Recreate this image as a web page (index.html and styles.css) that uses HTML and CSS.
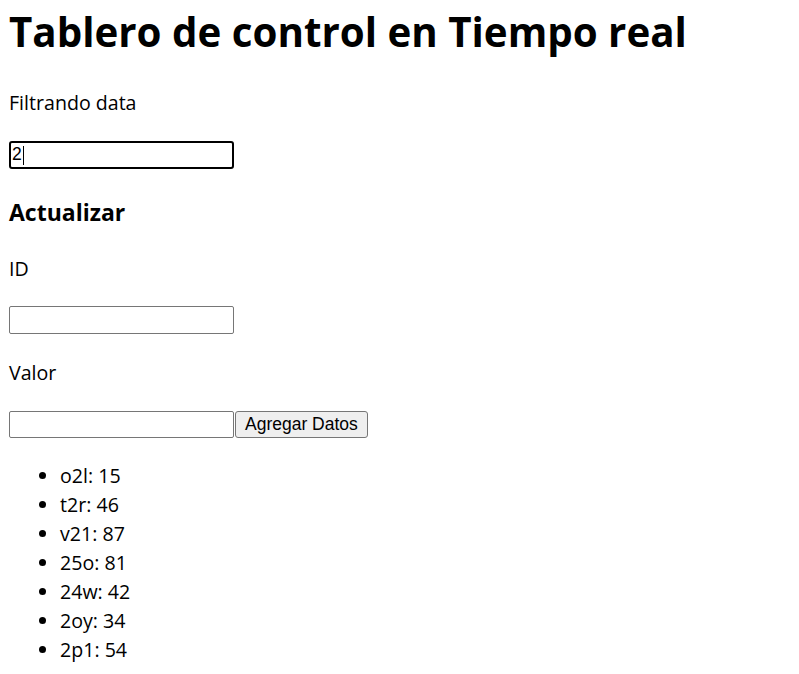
FILE: index.html
```html
<!DOCTYPE html>
<html lang="es">
<head>
<meta charset="utf-8">
<title>Tablero de control en Tiempo real</title>
<link rel="stylesheet" href="styles.css">
</head>
<body>
<h1 class="title">Tablero de control en Tiempo real</h1>
<p class="label">Filtrando data</p>
<p class="field"><input class="text-input focused" type="text" value="2"><span class="caret"></span></p>
<h3 class="subtitle">Actualizar</h3>
<p class="label">ID</p>
<p class="field"><input class="text-input" type="text"></p>
<p class="label">Valor</p>
<p class="field field-action"><input class="text-input short" type="text"><button class="btn" type="button">Agregar Datos</button></p>
<ul class="data-list">
<li>o2l: 15</li>
<li>t2r: 46</li>
<li>v21: 87</li>
<li>25o: 81</li>
<li>24w: 42</li>
<li>2oy: 34</li>
<li>2p1: 54</li>
</ul>
</body>
</html>
```
FILE: styles.css
```css
html, body {
  background: #ffffff;
}
body {
  margin: 0;
  padding: 0 9px;
  font-family: "Open Sans", "Noto Sans", sans-serif;
  font-size: 19.6px;
  line-height: 27px;
  color: #000;
}
.title {
  margin: 0 0 25px;
  font-size: 40.3px;
  line-height: 64px;
  font-weight: 700;
}
.label {
  margin: 0 0 24.5px;
}
.field {
  margin: 0 0 25px;
  display: flex;
  align-items: center;
  position: relative;
}
.field-action {
  margin-bottom: 23px;
}
.subtitle {
  margin: 27px 0 27px;
  font-size: 23px;
  line-height: 32px;
  font-weight: 700;
}
.text-input {
  box-sizing: border-box;
  width: 225px;
  height: 28px;
  margin: 0;
  padding: 1px 2px;
  border: 1px solid #767676;
  border-radius: 2px;
  font-family: "Liberation Sans", Arial, sans-serif;
  font-size: 17.5px;
  background: #fff;
  color: #000;
  outline: none;
}
.text-input.short {
  height: 27px;
}
.text-input.focused {
  border: 2px solid #000;
  border-radius: 3px;
  padding: 0 1px;
}
.caret {
  position: absolute;
  left: 14px;
  top: 5px;
  width: 1px;
  height: 19px;
  background: #000;
}
.btn {
  box-sizing: border-box;
  height: 27px;
  margin: 0 0 0 1px;
  padding: 0 9px;
  background: #efefef;
  border: 1px solid #767676;
  border-radius: 3px;
  font-family: "Liberation Sans", Arial, sans-serif;
  font-size: 17.5px;
  color: #000;
}
.data-list {
  margin: 0;
  padding-left: 51px;
}
.data-list li {
  line-height: 29px;
}
```
